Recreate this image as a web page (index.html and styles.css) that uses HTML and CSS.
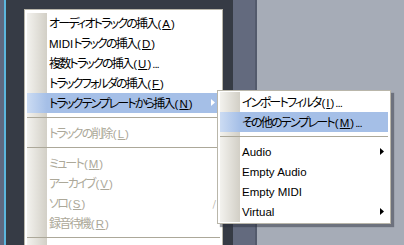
FILE: index.html
```html
<!DOCTYPE html>
<html lang="ja">
<head>
<meta charset="utf-8">
<title>メニュー</title>
<link rel="stylesheet" href="styles.css">
</head>
<body>
<div class="desk">
  <div class="strip-a"></div>
  <div class="strip-b"></div>
  <div class="pane-dark"></div>
  <div class="pane-slate"></div>
  <div class="pane-edge"></div>
  <div class="pane-light"></div>
</div>

<div class="menu main-menu">
  <div class="item"><span class="label">オーディオトラックの挿入<span class="mn">(<u>A</u>)</span></span></div>
  <div class="item"><span class="label"><span class="lat">MIDI</span>トラックの挿入<span class="mn">(<u>D</u>)</span></span></div>
  <div class="item"><span class="label">複数トラックの挿入<span class="mn">(<u>U</u>)</span><span class="dots">...</span></span></div>
  <div class="item"><span class="label">トラックフォルダの挿入<span class="mn">(<u>F</u>)</span></span></div>
  <div class="item hl"><span class="label">トラックテンプレートから挿入<span class="mn">(<u>N</u>)</span></span><svg class="arrow" width="4" height="7" viewBox="0 0 4 7"><polygon points="0,0 4,3.5 0,7" fill="#ffffff"/></svg></div>
  <div class="sep"></div>
  <div class="item off"><span class="label">トラックの削除<span class="mn">(<u>L</u>)</span></span></div>
  <div class="sep"></div>
  <div class="item off"><span class="label">ミュート<span class="mn">(<u>M</u>)</span></span></div>
  <div class="item off"><span class="label">アーカイブ<span class="mn">(<u>V</u>)</span></span></div>
  <div class="item off"><span class="label">ソロ<span class="mn">(<u>S</u>)</span></span><span class="key">/</span></div>
  <div class="item off"><span class="label">録音待機<span class="mn">(<u>R</u>)</span></span></div>
  <div class="sep"></div>
  <div class="item"><span class="label"></span></div>
</div>

<div class="menu sub-menu">
  <div class="item"><span class="label">インポートフィルタ<span class="mn">(<u>I</u>)</span><span class="dots">...</span></span></div>
  <div class="item hl"><span class="label">その他のテンプレート<span class="mn">(<u>M</u>)</span><span class="dots">...</span></span></div>
  <div class="sep"></div>
  <div class="item"><span class="label lat">Audio</span><svg class="arrow" width="4" height="7" viewBox="0 0 4 7"><polygon points="0,0 4,3.5 0,7" fill="#000000"/></svg></div>
  <div class="item"><span class="label lat">Empty Audio</span></div>
  <div class="item"><span class="label lat">Empty MIDI</span></div>
  <div class="item"><span class="label lat">Virtual</span><svg class="arrow" width="4" height="7" viewBox="0 0 4 7"><polygon points="0,0 4,3.5 0,7" fill="#000000"/></svg></div>
</div>
</body>
</html>
```

FILE: styles.css
```css
html, body {
  margin: 0;
  padding: 0;
  width: 404px;
  height: 245px;
  overflow: hidden;
}

body {
  position: relative;
  font-family: "Noto Sans CJK JP", "Noto Sans", sans-serif;
  font-size: 12px;
  font-feature-settings: "palt";
  letter-spacing: -1.8px;
  color: #000;
}

.desk {
  display: flex;
  height: 245px;
}

.strip-a { width: 4px; background: #5f6980; }
.strip-b { width: 2px; background: #5cb6dd; }
.pane-dark { width: 227px; background: #363b45; }
.pane-slate { width: 22px; background: #636a7e; }
.pane-edge { width: 2px; background: #535a6c; }
.pane-light { flex: 1; background: #a6acb7; }

.menu {
  position: absolute;
  box-sizing: border-box;
  border: 1px solid #b9b6aa;
  background:
    linear-gradient(90deg, #f3f2ee, #d2cfc6) 0 0 / 20px 100% no-repeat content-box,
    #ffffff;
}

.main-menu {
  left: 24px;
  top: 9px;
  width: 199px;
  height: 260px;
  padding: 3px 2px 0 2px;
}

.sub-menu {
  left: 217px;
  top: 90px;
  width: 174px;
  padding: 1px 2px;
  box-shadow: 3px 3px 1px rgba(40, 44, 58, 0.45);
}

.item {
  display: flex;
  align-items: center;
  height: 20px;
  padding-left: 22px;
  padding-right: 4px;
  white-space: nowrap;
}

.label {
  flex: 1;
  line-height: 20px;
}

.lat,
.mn,
.dots {
  font-family: "Liberation Sans", Arial, sans-serif;
  font-size: 11.5px;
  letter-spacing: 0;
}

.mn {
  letter-spacing: 1px;
  padding-left: 1px;
}

.dots {
  letter-spacing: -1px;
}

.item.hl {
  background: linear-gradient(90deg, #ccdcf3, #a5bfe7 20px);
}

.item.off { color: #aca899; }

.main-menu .item.hl .arrow { margin-right: 1px; }

.arrow {
  flex: none;
  margin-bottom: 2px;
}

.key {
  font-size: 9px;
  letter-spacing: 0;
  color: #aca899;
}

.sep {
  height: 10px;
  background:
    linear-gradient(#aca899, #aca899) 0 4px / 100% 1px no-repeat;
}
```
